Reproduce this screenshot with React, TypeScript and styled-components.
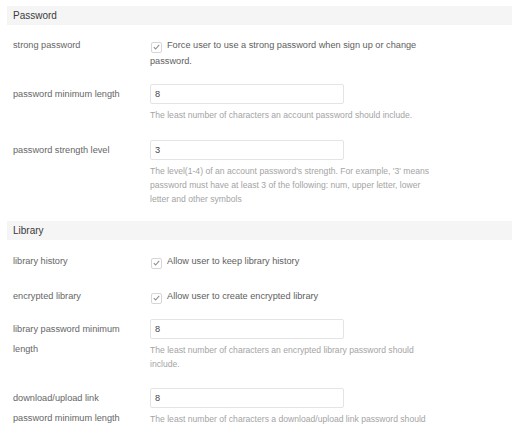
import styled, { createGlobalStyle } from 'styled-components';

const GlobalStyle = createGlobalStyle`
  body {
    margin: 0;
    background: #fff;
    font-family: "Liberation Sans", Arial, sans-serif;
  }
`;

interface RowData {
  label: string;
  gap: number;
  check?: string;
  value?: string;
  help?: string;
}

const passwordRows: RowData[] = [
  { label: 'strong password', gap: 12, check: 'Force user to use a strong password when sign up or change password.' },
  {
    label: 'password minimum length',
    gap: 15,
    value: '8',
    help: 'The least number of characters an account password should include.',
  },
  {
    label: 'password strength level',
    gap: 18,
    value: '3',
    help: "The level(1-4) of an account password's strength. For example, '3' means password must have at least 3 of the following: num, upper letter, lower letter and other symbols",
  },
];

const libraryRows: RowData[] = [
  { label: 'library history', gap: 13, check: 'Allow user to keep library history' },
  { label: 'encrypted library', gap: 19, check: 'Allow user to create encrypted library' },
  {
    label: 'library password minimum length',
    gap: 15,
    value: '8',
    help: 'The least number of characters an encrypted library password should include.',
  },
  {
    label: 'download/upload link password minimum length',
    gap: 17,
    value: '8',
    help: 'The least number of characters a download/upload link password should include.',
  },
];

function CheckMark() {
  return (
    <svg width="7" height="6" viewBox="0 0 7 6">
      <path d="M0.8 3.2 L2.6 5 L6.2 0.9" fill="none" stroke="#8f8f8f" strokeWidth="1.1" />
    </svg>
  );
}

function SettingRow({ row }: { row: RowData }) {
  const isInput = row.value !== undefined;
  return (
    <Row $gap={row.gap}>
      <Label $tall={isInput}>{row.label}</Label>
      <Value>
        {row.check && (
          <CheckLine>
            <Box>
              <CheckMark />
            </Box>
            {row.check}
          </CheckLine>
        )}
        {isInput && <Input defaultValue={row.value} />}
        {row.help && <Help>{row.help}</Help>}
      </Value>
    </Row>
  );
}

export default function App() {
  return (
    <>
      <GlobalStyle />
      <Page>
        <Header $top={6}>Password</Header>
        {passwordRows.map((row) => (
          <SettingRow key={row.label} row={row} />
        ))}
        <Header $top={15}>Library</Header>
        {libraryRows.map((row) => (
          <SettingRow key={row.label} row={row} />
        ))}
      </Page>
    </>
  );
}

const Page = styled.div`
  width: 520px;
  height: 429px;
  overflow: hidden;
  padding: 0 8px 0 7px;
  box-sizing: border-box;
`;

const Header = styled.h4<{ $top: number }>`
  margin: ${(p) => p.$top}px 0 0;
  height: 19px;
  padding-left: 6px;
  background: #f5f5f5;
  color: #3a3a3a;
  font-size: 10px;
  font-weight: normal;
  line-height: 19px;
`;

const Row = styled.div<{ $gap: number }>`
  display: flex;
  align-items: flex-start;
  margin-top: ${(p) => p.$gap}px;
`;

const Label = styled.div<{ $tall: boolean }>`
  width: 143px;
  flex-shrink: 0;
  box-sizing: border-box;
  padding: 0 16px 0 6px;
  color: #666;
  font-size: 9.2px;
  line-height: ${(p) => (p.$tall ? 20 : 16)}px;
`;

const Value = styled.div`
  width: 290px;
`;

const CheckLine = styled.div`
  color: #5e5e5e;
  font-size: 9.2px;
  line-height: 16px;
`;

const Box = styled.span`
  display: inline-flex;
  align-items: center;
  justify-content: center;
  width: 11px;
  height: 11px;
  box-sizing: border-box;
  margin: 0 5px 0 1px;
  border: 1px solid #d6d6d6;
  border-radius: 2px;
  vertical-align: -2px;
`;

const Input = styled.input`
  display: block;
  width: 194px;
  height: 20px;
  box-sizing: border-box;
  margin: 0;
  padding: 0 4px;
  border: 1px solid #e4e4e4;
  border-radius: 2px;
  outline: none;
  color: #444;
  font-family: inherit;
  font-size: 9.2px;
`;

const Help = styled.p`
  margin: 4px 0 0;
  color: #a4a4a4;
  font-size: 8.6px;
  line-height: 14px;
`;
